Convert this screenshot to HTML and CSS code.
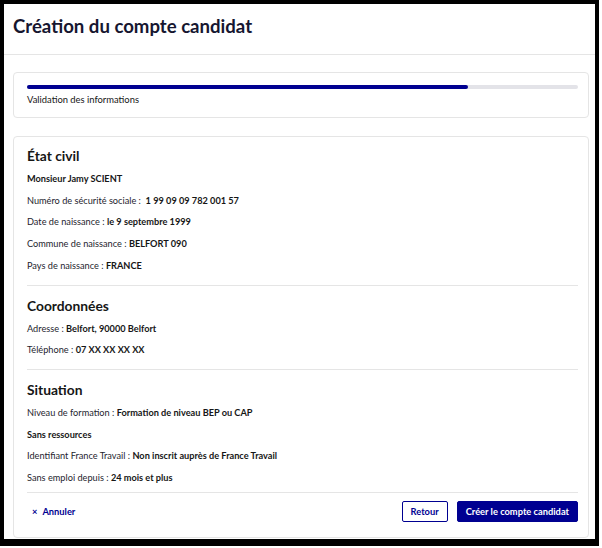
FILE: index.html
```html
<!DOCTYPE html>
<html lang="fr">
<head>
    <meta charset="UTF-8">
    <meta name="viewport" content="width=device-width, initial-scale=1.0">
    <title>Création du compte candidat</title>
    <link rel="stylesheet" href="styles.css">
</head>
<body>
    <div class="frame">
        <header class="page-header">
            <h1>Création du compte candidat</h1>
        </header>

        <main class="page-content">
            <section class="card stepper">
                <div class="progress">
                    <div class="progress-fill" style="width: 80%"></div>
                </div>
                <p class="step-label">Validation des informations</p>
            </section>

            <section class="card recap">
                <div class="recap-section">
                    <h2>État civil</h2>
                    <p><b>Monsieur Jamy SCIENT</b></p>
                    <p>Numéro de sécurité sociale : &nbsp;<b>1 99 09 09 782 001 57</b></p>
                    <p>Date de naissance : <b>le 9 septembre 1999</b></p>
                    <p>Commune de naissance : <b>BELFORT 090</b></p>
                    <p>Pays de naissance : <b>FRANCE</b></p>
                </div>

                <div class="recap-section">
                    <h2>Coordonnées</h2>
                    <p>Adresse : <b>Belfort, 90000 Belfort</b></p>
                    <p>Téléphone : <b>07 XX XX XX XX</b></p>
                </div>

                <div class="recap-section recap-section-last">
                    <h2>Situation</h2>
                    <p>Niveau de formation : <b>Formation de niveau BEP ou CAP</b></p>
                    <p><b>Sans ressources</b></p>
                    <p>Identifiant France Travail : <b>Non inscrit auprès de France Travail</b></p>
                    <p>Sans emploi depuis : <b>24 mois et plus</b></p>
                </div>

                <div class="form-actions">
                    <a href="#" class="link-cancel"><span class="cross">×</span>Annuler</a>
                    <div class="buttons">
                        <button type="button" class="btn btn-secondary">Retour</button>
                        <button type="submit" class="btn btn-primary">Créer le compte candidat</button>
                    </div>
                </div>
            </section>
        </main>
    </div>
</body>
</html>
```

FILE: styles.css
```css
body {
    margin: 0;
    font-family: Lato, "Noto Sans", Arial, sans-serif;
    color: #161616;
    background: #fff;
}
.frame {
    width: 599px;
    height: 546px;
    box-sizing: border-box;
    border: 4px solid #000;
    border-bottom-width: 7px;
    overflow: hidden;
}
.page-header {
    height: 51px;
    box-sizing: border-box;
    border-bottom: 1px solid #e5e5e5;
    display: flex;
    align-items: center;
    padding: 0 0 6px 9px;
}
h1 {
    margin: 0;
    font-size: 18.6px;
    font-weight: 700;
    color: #161630;
}
.page-content {
    padding: 17px 6px 0 9px;
}
.card {
    border: 1px solid #e5e5e5;
    border-radius: 4px;
}
.stepper {
    padding: 12px 10px 9px 13px;
    margin-bottom: 18px;
}
.progress {
    height: 4px;
    border-radius: 2px;
    background: #e3e3e8;
}
.progress-fill {
    height: 100%;
    border-radius: 2px;
    background: #000091;
}
.step-label {
    margin: 3px 0 0;
    font-size: 9.4px;
    line-height: 16px;
}
.recap {
    padding: 8px 10px 15px 13px;
}
.recap-section {
    padding: 9px 0 8px;
    border-bottom: 1px solid #e5e5e5;
}
.recap-section:first-child {
    padding-top: 0;
}
.recap-section-last {
    padding-bottom: 3px;
}
h2 {
    margin: 0;
    font-size: 13.8px;
    line-height: 22px;
    font-weight: 700;
}
.recap-section p {
    margin: 0;
    font-size: 9.2px;
    line-height: 21.7px;
    color: #1e1e2e;
}
.recap-section p:nth-of-type(1) {
    margin-top: 1px;
}
.recap-section b {
    font-weight: 700;
    color: #161616;
}
.form-actions {
    display: flex;
    justify-content: space-between;
    align-items: center;
    padding-top: 8px;
}
.link-cancel {
    font-size: 9.3px;
    font-weight: 700;
    color: #000091;
    text-decoration: none;
    padding-left: 5px;
}
.cross {
    margin-right: 5px;
}
.buttons {
    display: flex;
    gap: 9px;
}
.btn {
    font-family: inherit;
    font-size: 9.3px;
    font-weight: 700;
    height: 21px;
    padding: 0 8px;
    border-radius: 2px;
    cursor: pointer;
}
.btn-secondary {
    background: #fff;
    color: #000091;
    border: 1px solid #000091;
}
.btn-primary {
    background: #000091;
    color: #fff;
    border: 1px solid #000091;
}
```
